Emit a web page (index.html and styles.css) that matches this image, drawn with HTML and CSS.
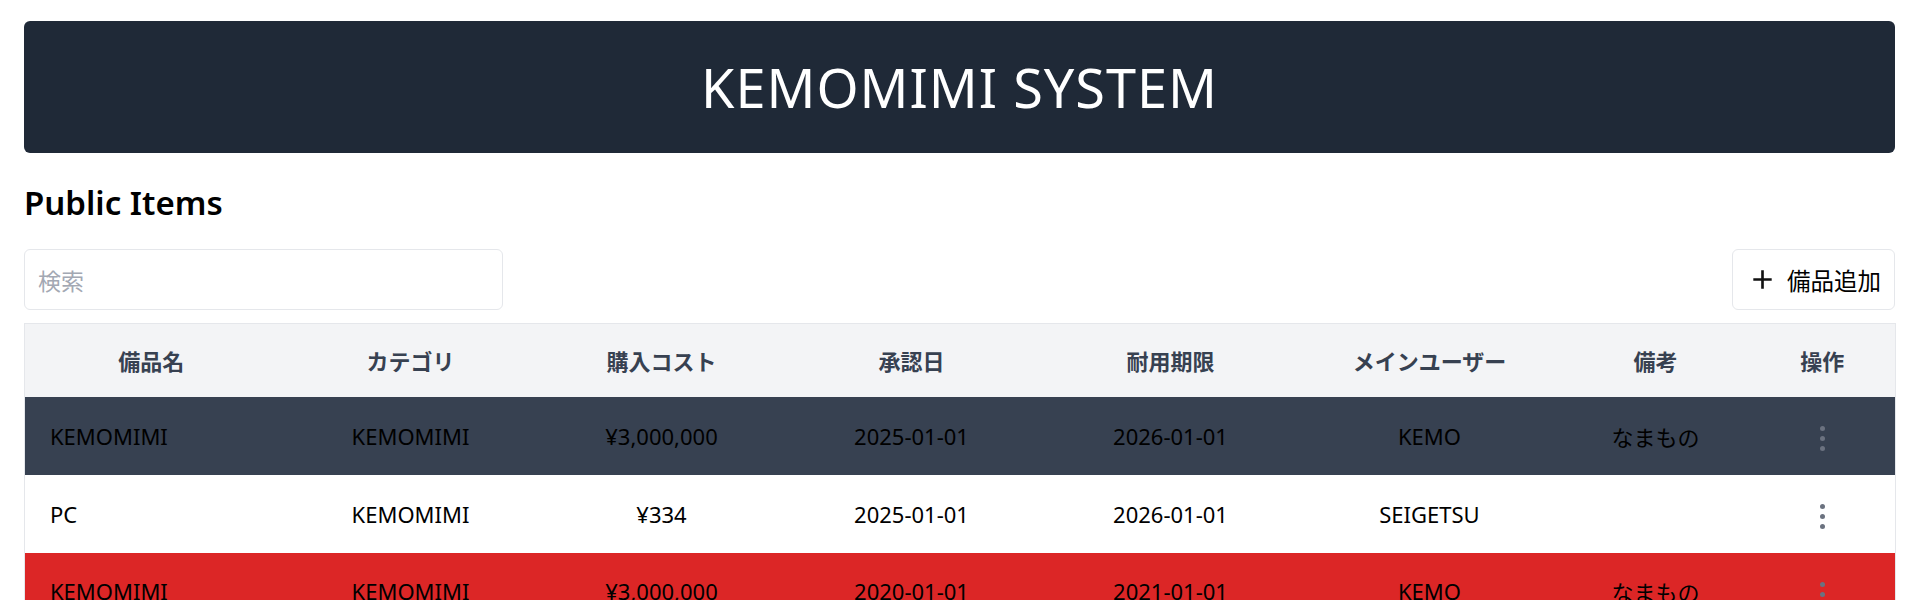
FILE: index.html
```html
<!DOCTYPE html>
<html lang="ja">
<head>
<meta charset="utf-8">
<title>KEMOMIMI SYSTEM</title>
<link rel="stylesheet" href="styles.css">
</head>
<body>
<div class="page">
  <header class="banner">
    <h1 class="banner-title">KEMOMIMI SYSTEM</h1>
  </header>
  <h2 class="section-title">Public Items</h2>
  <div class="toolbar">
    <input class="search" type="text" placeholder="検索">
    <button class="add-btn" type="button">
      <svg class="plus" viewBox="0 0 24 24" width="21" height="21" aria-hidden="true"><path d="M12 1.5v21M1.5 12h21" stroke="#111" stroke-width="3" fill="none"/></svg>
      <span>備品追加</span>
    </button>
  </div>
  <table class="items">
    <colgroup>
      <col class="c1"><col class="c2"><col class="c3"><col class="c4"><col class="c5"><col class="c6"><col class="c7"><col class="c8">
    </colgroup>
    <thead>
      <tr>
        <th>備品名</th><th>カテゴリ</th><th>購入コスト</th><th>承認日</th><th>耐用期限</th><th>メインユーザー</th><th>備考</th><th>操作</th>
      </tr>
    </thead>
    <tbody>
      <tr class="row-dark">
        <td class="name">KEMOMIMI</td><td>KEMOMIMI</td><td>¥3,000,000</td><td>2025-01-01</td><td>2026-01-01</td><td>KEMO</td><td>なまもの</td>
        <td><span class="kebab"><i></i><i></i><i></i></span></td>
      </tr>
      <tr class="row-plain">
        <td class="name">PC</td><td>KEMOMIMI</td><td>¥334</td><td>2025-01-01</td><td>2026-01-01</td><td>SEIGETSU</td><td></td>
        <td><span class="kebab"><i></i><i></i><i></i></span></td>
      </tr>
      <tr class="row-red">
        <td class="name">KEMOMIMI</td><td>KEMOMIMI</td><td>¥3,000,000</td><td>2020-01-01</td><td>2021-01-01</td><td>KEMO</td><td>なまもの</td>
        <td><span class="kebab"><i></i><i></i><i></i></span></td>
      </tr>
    </tbody>
  </table>
</div>
</body>
</html>
```

FILE: styles.css
```css
* { box-sizing: border-box; }
html, body { margin: 0; padding: 0; background: #ffffff; }
body {
  font-family: "Noto Sans", "Noto Sans CJK JP", sans-serif;
  color: #000;
  font-size: 24px;
}
.page { padding: 21px 24px 0 24px; }

.banner {
  background: #1f2937;
  border-radius: 6px;
  height: 132px;
  display: flex;
  align-items: center;
  justify-content: center;
}
.banner-title {
  margin: 0;
  color: #fff;
  font-weight: 400;
  font-size: 54px;
  line-height: 1;
  letter-spacing: 1px;
}

.section-title {
  margin: 26px 0 0 0;
  height: 70px;
  font-size: 33px;
  line-height: 48px;
  font-weight: 600;
  color: #000;
}

.toolbar {
  display: flex;
  justify-content: space-between;
  align-items: center;
  margin-bottom: 13px;
}
.search {
  width: 479px;
  height: 61px;
  border: 1px solid #e5e7eb;
  border-radius: 6px;
  padding: 0 13px;
  font-family: "Noto Sans CJK JP", sans-serif;
  font-size: 23px;
  color: #111;
  outline: none;
}
.search::placeholder { color: #a3a8b3; }

.add-btn {
  height: 61px;
  width: 163px;
  display: flex;
  align-items: center;
  gap: 14px;
  padding: 0 0 0 19px;
  background: #fff;
  border: 1px solid #e5e7eb;
  border-radius: 6px;
  font-family: "Noto Sans CJK JP", sans-serif;
  font-size: 23.5px;
  color: #000;
}
.plus { display: block; flex: none; }

.items {
  width: 100%;
  border-collapse: collapse;
  table-layout: fixed;
  border: 1px solid #e5e7eb;
}
.c1 { width: 253px; }
.c2 { width: 266px; }
.c3 { width: 236px; }
.c4 { width: 264px; }
.c5 { width: 254px; }
.c6 { width: 264px; }
.c7 { width: 188px; }
.c8 { width: 146px; }

.items th {
  background: #f3f4f6;
  height: 73px;
  font-family: "Noto Sans CJK JP", sans-serif;
  font-weight: 700;
  font-size: 22px;
  color: #374151;
  text-align: center;
  padding: 0;
}
.items td {
  height: 78px;
  text-align: center;
  vertical-align: middle;
  padding: 0;
  font-size: 22px;
  color: #000;
  white-space: nowrap;
}
.items td.name { text-align: left; padding-left: 25px; }

.row-dark td { background: #374151; }
.row-plain td { background: #ffffff; }
.row-red td { background: #dc2626; }

.kebab {
  display: inline-flex;
  flex-direction: column;
  gap: 5px;
  vertical-align: middle;
}
.kebab i {
  display: block;
  width: 5px;
  height: 5px;
  border-radius: 50%;
  background: #6b7280;
}
```
